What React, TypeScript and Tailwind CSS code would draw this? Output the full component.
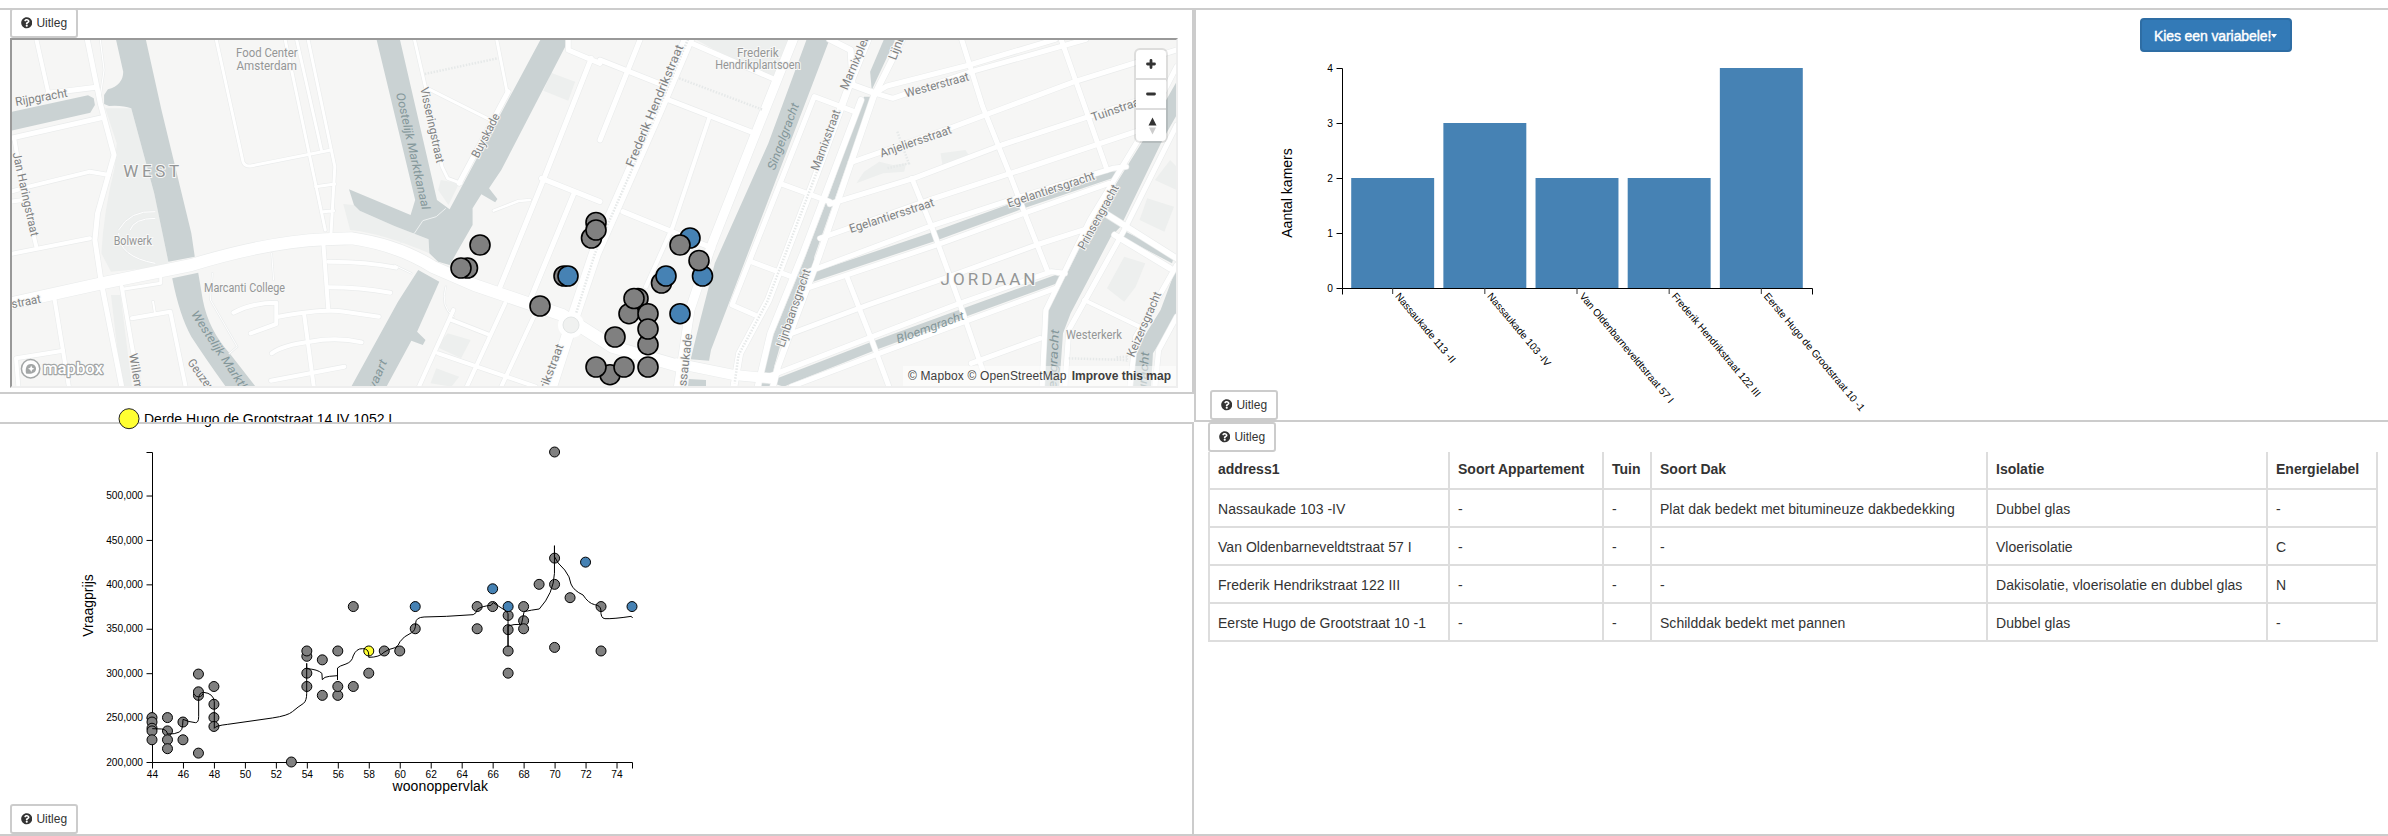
import React from "react";
import { FaQuestionCircle } from "react-icons/fa";

type Pt = [number, number];

const SX = 600 / 1568;
const SY = 1 / 3;
const EAST = 1568;

const GRAY = "#808080";
const BLUE = "#4682b4";

/* ---------- shared ---------- */

function HelpButton({ className = "" }: { className?: string }) {
  return (
    <button
      className={`flex h-[30px] w-[68px] items-center justify-center gap-1 rounded-[3px] border-2 border-[#ccc] bg-white text-xs leading-none text-[#333] ${className}`}
    >
      <FaQuestionCircle className="size-[11.500px]" />
      <span>Uitleg</span>
    </button>
  );
}

/* ---------- map ---------- */

const westWater = [
  "M303,118L381,118L422,330L500,700L509,770L440,785L403,580L343,325Q320,315 285,318L272,312L272,285L282,268Q322,255 322,215Z",
  "M28,336L230,286L245,295L248,315L236,338L28,392Z",
  "M450,835L518,818L530,900Q545,990 600,1060L668,1160L590,1160Q540,1080 500,1010Q470,950 450,835Z",
  "M984,118L1045,118L1142,600L1175,628L1413,118L1487,118L1310,510L1278,565L1300,597L1294,607L1258,583L1235,625L1235,675L1200,745L1175,795L1145,785L1122,760L1120,718Q1030,680 940,632L925,615L912,568L1073,645L1085,600Z",
  "M1093,810L1148,845L1090,995L1112,1020L1105,1035L1075,1022L1010,1160L918,1160L1040,905Z",
];
const eastWater = [
  "M540,118L600,118L330,930L290,1050L285,1082L237,1078L262,960L300,790L440,430Z",
  "M232,1137L277,1140L277,1160L230,1160Z",
  "M742,118L772,118L710,270L706,215Z",
  "M690,290L708,290L560,770L552,850L525,860L480,1000L455,1100L448,1160L422,1160Q425,1100 455,1000L530,790L600,580Z",
  "M550,820L860,700L1100,600L1330,515L1362,512L1350,530L1100,628L870,725L545,850Z",
  "M440,1145L700,1030L950,925L1190,825L1203,830L1195,850L955,950L720,1050L480,1160Z",
  "M1507,245L1507,345L1470,420L1360,680L1335,710L1230,940L1210,1000L1200,1160L1160,1160L1162,1000L1170,935L1290,660L1420,420Z",
  "M1365,690L1500,768L1495,790L1355,705Z",
  "M1507,800L1507,950L1445,1060L1440,1160L1392,1160L1400,1050L1465,930Z",
];
const westParks = [
  "M275,325L343,325L403,580L440,785L430,800L290,815L265,760Q270,640 300,500L305,430Z",
  "M897,612L925,615L940,632Q1030,680 1120,718L1122,760Q1000,700 915,690Z",
  "M290,885L315,885L345,1160L318,1160Z",
  "M1440,218L1503,245L1485,302L1420,272Z",
  "M1152,540L1200,550L1172,615L1145,570Z",
  "M1170,1000L1230,1020L1205,1075L1140,1040Z",
  "M1140,1105L1200,1130L1180,1160L1125,1150Z",
];
const eastParks = [
  "M250,118L520,118L460,235L300,150Z",
  "M670,550L690,515L730,485L765,495L800,490L795,515L740,520Z",
  "M890,460L955,450L965,468L895,495Z",
  "M1490,480L1507,500L1507,570L1450,540Z",
  "M1430,595L1500,620L1475,695L1410,660Z",
  "M1370,770L1425,790L1400,860L1370,905L1325,865Z",
];

type Road = [number, string];
const westRoads: Road[] = [
  [4, "M95,118L125,272"],
  [5, "M228,118L262,310L298,465L255,640L248,720L265,850L318,1160"],
  [1.2, "M262,118L272,210L262,290"],
  [5, "M28,415L270,352"],
  [5, "M125,280L250,262"],
  [4, "M28,575L75,560L235,515L285,525"],
  [4, "M28,605L60,600"],
  [4, "M28,762L235,715"],
  [4, "M38,420L65,600L95,740"],
  [4, "M140,880L180,1160"],
  [4, "M42,1075L165,1052M42,1075L48,1160"],
  [4, "M318,860L345,1040L365,1160M345,955L445,935L485,1160"],
  [2, "M400,905L405,940"],
  [3, "M320,868L420,850L420,820"],
  [3, "M565,118L635,485Q640,500 655,498L865,450"],
  [3, "M745,118L850,690M775,118L840,450"],
  [3, "M805,118L875,500L865,700M825,560L875,552M845,635L872,632"],
  [4, "M845,730L858,930"],
  [4, "M858,785Q960,785 1035,803M858,862Q940,862 1020,878"],
  [4, "M610,938Q660,908 722,908L722,972L655,1000M728,950Q850,925 900,935L990,950"],
  [4, "M795,945L820,1160"],
  [4, "M710,1060Q740,1035 810,1025Q880,1010 945,1027M708,1142L900,1100"],
  [3, "M1083,118L1112,262L1155,500L1170,535L1205,550"],
  [3, "M1112,262L1290,365M1298,118L1325,275"],
  [5, "M1328,275L1200,550"],
  [5, "M1545,175L1420,540L1300,880M1415,535L1568,605M1500,580L1380,915M1485,118L1485,150L1568,190"],
  [2.5, "M1290,632L1355,603L1385,600"],
  [4, "M1185,930L1095,1160M1180,960L1280,1005M1320,910L1220,1160M1395,950L1310,1160M1145,1060L1400,1160"],
  [1, "M555,820L550,900L620,1040L600,1060M710,760L715,840M1030,795L1075,820M1165,860Q1150,920 1185,950"],
  [1, "M310,690Q340,630 405,635M310,700Q310,770 405,790M340,690Q350,655 405,655"],
];
const eastRoads: Road[] = [
  [5, "M105,118L0,420M0,180L175,260M240,130L460,240M180,300L405,400M60,635L295,745"],
  [4, "M285,355L190,680L120,860"],
  [5, "M720,278L750,258L965,195L1190,118M720,280L765,295L970,215L1270,118"],
  [5, "M655,488L920,382L1240,245L1507,150M600,612L820,535L1050,435L1410,300"],
  [5, "M575,715L860,600L1100,510L1400,395"],
  [5, "M545,815L860,680L1100,590L1340,505L1375,500M540,865L880,735L1120,635L1330,550"],
  [5, "M490,1005L700,915L900,835L1140,735L1290,680"],
  [5, "M440,1130L700,1015L940,910L1180,815L1215,820M500,1160L730,1060L960,962L1190,865"],
  [5, "M970,1090L1150,1015"],
  [5, "M945,118L1000,320L1070,520L1110,640L1170,815M1205,118L1270,330L1325,510"],
  [5, "M815,535L870,690L940,910L1000,1110M645,830L710,1020L755,1160"],
  [5, "M1507,200L1420,395L1280,660L1165,930L1155,1160M1507,375L1370,690L1225,990L1215,1160"],
  [6, "M1320,640L1507,775M1345,705L1490,805"],
  [5, "M1507,795L1460,890L1400,1010L1385,1160M1507,950L1460,1050L1450,1160"],
  [4, "M1265,900L1410,980"],
  [7, "M700,118L650,260L560,540L440,900L365,1060L350,1160"],
  [6, "M790,118L715,290L572,770L510,960L465,1100L452,1160M682,300L530,760L445,1000L412,1160"],
  [6, "M600,118L655,150L660,255L720,280"],
  [5, "M665,335L560,290L345,915L405,945M470,550L600,605M395,785L500,830"],
  [9, "M505,118L400,420L290,740L235,930L205,1160"],
  [10, "M200,1090L350,1125L445,1135"],
];
const artery: Road[] = [
  [12, "M28,910L265,850L500,795Q700,725 850,718L920,715Q1040,735 1130,800L1240,855L1470,945L1600,1040L1780,1100"],
  [12, "M1798,118L1720,330L1555,760L1492,975L1440,1160"],
];

function Roads({ data, cased }: { data: Road[]; cased: boolean }) {
  return (
    <>
      {data.map(([w, d], i) => (
        <path
          key={i}
          d={d}
          fill="none"
          strokeLinecap="round"
          strokeLinejoin="round"
          vectorEffect="non-scaling-stroke"
          stroke={cased ? "#eaecec" : "#ffffff"}
          strokeWidth={cased ? w + 1.2 : w}
        />
      ))}
    </>
  );
}

function Shapes({ data, fill }: { data: string[]; fill: string }) {
  return (
    <>
      {data.map((d, i) => (
        <path key={i} d={d} fill={fill} />
      ))}
    </>
  );
}

type LabelSpec = {
  t: string;
  a: Pt;
  b: Pt;
  size?: number;
  water?: boolean;
  place?: boolean;
};

const west = (t: string, a: Pt, b: Pt, o: Partial<LabelSpec> = {}): LabelSpec => ({ t, a, b, ...o });
const east = (t: string, a: Pt, b: Pt, o: Partial<LabelSpec> = {}): LabelSpec => ({
  t,
  a: [a[0] + EAST, a[1]],
  b: [b[0] + EAST, b[1]],
  ...o,
});

const labels: LabelSpec[] = [
  west("Food Center", [617, 157], [778, 157], { place: true }),
  west("Amsterdam", [618, 196], [776, 196], { place: true }),
  west("Rijpgracht", [40, 305], [176, 277]),
  west("Jan Haringstraat", [44, 457], [92, 708]),
  west("WEST", [322, 512], [468, 512], { size: 17, place: true }),
  west("Bolwerk", [297, 722], [397, 722], { place: true }),
  west("Marcanti College", [533, 862], [745, 862], { place: true }),
  west("straat", [30, 912], [106, 895]),
  west("Westelijk Marktk", [508, 935], [643, 1170], { water: true }),
  west("Willem", [348, 1060], [364, 1170]),
  west("Geuzen", [498, 1080], [555, 1170]),
  west("Oostelijk Marktkanaal", [1046, 278], [1114, 628], { water: true }),
  west("Visseringstraat", [1109, 262], [1152, 488]),
  west("Buyskade", [1240, 470], [1297, 342]),
  west("vaart", [970, 1165], [1002, 1080], { water: true }),
  west("rikstraat", [1419, 1165], [1463, 1033]),
  east("Frederik Hendrikstraat", [76, 498], [208, 135]),
  east("Frederik", [358, 157], [467, 157], { place: true }),
  east("Hendrikplantsoen", [301, 193], [524, 193], { place: true }),
  east("Singelgracht", [446, 508], [510, 310], { water: true }),
  east("Marnixplein", [636, 267], [698, 95]),
  east("Marnixstraat", [560, 510], [618, 330]),
  east("Lijnb", [762, 178], [786, 105]),
  east("Lijnbaansgracht", [470, 1040], [540, 808]),
  east("ssaukade", [214, 1158], [230, 1000]),
  east("Westerstraat", [797, 280], [963, 228]),
  east("Tuinstraat", [1285, 352], [1418, 300]),
  east("Anjeliersstraat", [732, 460], [917, 387]),
  east("Egelantiersstraat", [652, 687], [872, 605]),
  east("Egelantiersgracht", [1065, 610], [1292, 525]),
  east("Prinsengracht", [1256, 745], [1347, 556]),
  east("JORDAAN", [890, 836], [1138, 836], { size: 17, place: true }),
  east("Bloemgracht", [775, 1018], [950, 945], { water: true }),
  east("Westerkerk", [1218, 1005], [1364, 1005], { place: true }),
  east("Keizersgracht", [1385, 1068], [1457, 876]),
  east("sengracht", [1180, 1190], [1188, 988], { water: true }),
  east("gracht", [1416, 1175], [1424, 1055], { water: true }),
];

function MapLabel({ t, a, b, size = 12, water, place }: LabelSpec) {
  const x = a[0] * SX;
  const y = a[1] * SY;
  const dx = b[0] * SX - x;
  const dy = b[1] * SY - y;
  const len = Math.hypot(dx, dy);
  const angle = (Math.atan2(dy, dx) * 180) / Math.PI;
  return (
    <text
      transform={`translate(${x} ${y}) rotate(${angle})`}
      dy="0.36em"
      textLength={len}
      lengthAdjust={size > 14 ? "spacing" : "spacingAndGlyphs"}
      fontSize={size}
      fontStyle={water ? "italic" : "normal"}
      fill={water ? "#84979a" : place ? "#949696" : "#7f8283"}
      stroke={water ? "none" : "#f8f8f7"}
      strokeWidth={water ? 0 : 2}
      paintOrder="stroke"
    >
      {t}
    </text>
  );
}

type Marker = [number, number, boolean?];
const markers: Marker[] = [
  [467.5, 268], [461, 268], [480, 245], [596, 222.5], [591.5, 238], [596, 230],
  [564, 276], [568, 276, true], [540, 306], [690, 238, true], [680, 245],
  [702.5, 276, true], [699, 260.5], [661.5, 283], [666, 276, true], [680, 313.7, true],
  [638, 298.5], [629, 313.7], [648, 313.7], [634, 298.5], [648, 344.7], [648, 329],
  [615, 337], [610, 374.7], [596, 367], [624, 367], [648, 367],
];

function CityMap() {
  return (
    <div className="relative h-[350px] w-[1168px] overflow-hidden border-2 border-t-[#999] border-r-[#eee] border-b-[#eee] border-l-[#999] bg-[#f6f6f5]">
      <svg className="block h-[346px] w-[1164px] font-['Roboto','Noto_Sans',sans-serif]" viewBox="12 40 1164 346">
        <g transform={`scale(${SX} ${SY})`}>
          <Shapes data={westParks} fill="#edefee" />
          <g transform={`translate(${EAST} 0)`}>
            <Shapes data={eastParks} fill="#edefee" />
          </g>
          <Shapes data={westWater} fill="#cad2d3" />
          <g transform={`translate(${EAST} 0)`}>
            <Shapes data={eastWater} fill="#cad2d3" />
          </g>
          <Roads data={westRoads} cased />
          <g transform={`translate(${EAST} 0)`}>
            <Roads data={eastRoads} cased />
          </g>
          <Roads data={artery} cased />
          <Roads data={westRoads} cased={false} />
          <g transform={`translate(${EAST} 0)`}>
            <Roads data={eastRoads} cased={false} />
          </g>
          <Roads data={artery} cased={false} />
          <path
            d="M1045,730L1083,700L1105,662L1140,650L1165,625"
            fill="none"
            stroke="#eef1f1"
            vectorEffect="non-scaling-stroke"
          />
          <path
            d="M1798,118L1720,330L1555,760L1500,960M2195,330L2125,545L2005,905L1930,1065L1920,1150M1775,235L1995,330M2345,395L2375,490L2318,505M2918,1072L2945,1070L2945,1085M2793,1075L2945,1080M1110,222L1300,175"
            fill="none"
            stroke="#e6e9e9"
            strokeWidth={2.5}
            strokeDasharray="1.5 1.5"
            vectorEffect="non-scaling-stroke"
          />
        </g>
        <circle cx={571} cy={325} r={13} fill="#fff" />
        <circle cx={571} cy={325} r={8} fill="#f0f1f0" stroke="#e3e6e6" />
        {labels.map((l, i) => (
          <MapLabel key={i} {...l} />
        ))}
        <g>
          <circle cx={30.6} cy={368.7} r={9.2} fill="#fff" fillOpacity={0.9} stroke="#a3a6a6" strokeWidth={1.5} />
          <path
            d="M26 373.5c-.8-4.600 0-9.500 5-9.500 3.200 0 5 2.200 5 4.800 0 4.600-5 5.500-10 4.700Z"
            fill="#a3a6a6"
          />
          <path d="m31.200 365.500 1 2.200 2.200 1-2.200 1-1 2.200-1-2.200-2.200-1 2.200-1Z" fill="#fff" />
          <text
            x={43}
            y={374}
            fontSize={17}
            fontWeight={500}
            textLength={60}
            lengthAdjust="spacingAndGlyphs"
            fill="#fff"
            stroke="#a3a6a6"
            strokeWidth={2.4}
            strokeLinejoin="round"
            paintOrder="stroke"
          >
            mapbox
          </text>
        </g>
        {markers.map(([x, y, blue], i) => (
          <circle key={i} cx={x} cy={y} r={10} fill={blue ? BLUE : GRAY} stroke="#000" strokeWidth={1.6} />
        ))}
      </svg>

      <div className="absolute top-[10px] right-[10px] flex w-[30px] flex-col divide-y-2 divide-[#ddd] rounded-[4px] bg-white shadow-[0_0_0_2px_rgba(0,0,0,0.1)]">
        <button className="flex h-[30px] items-center justify-center">
          <svg className="size-[20px]" viewBox="0 0 20 20">
            <path d="M10 6.500v7M6.500 10h7" stroke="#333" strokeWidth={2.8} strokeLinecap="round" />
          </svg>
        </button>
        <button className="flex h-[30px] items-center justify-center">
          <svg className="size-[20px]" viewBox="0 0 20 20">
            <path d="M6.500 10h7" stroke="#333" strokeWidth={2.8} strokeLinecap="round" />
          </svg>
        </button>
        <button className="flex h-[31px] items-center justify-center">
          <svg className="size-[20px]" viewBox="0 0 20 20">
            <path d="M7.500 9.500 11.500 1.500 15.500 9.500Z" fill="#333" />
            <path d="M8 11.500 11.500 18.500 15 11.500Z" fill="#ccc" />
          </svg>
        </button>
      </div>

      <div className="absolute right-0 bottom-0 flex h-5 items-center gap-[5px] bg-white/50 px-[5px] text-xs whitespace-nowrap text-[#404040]">
        <span className="tracking-[0.15px]">© Mapbox © OpenStreetMap</span>
        <b className="font-bold">Improve this map</b>
      </div>
    </div>
  );
}

/* ---------- scatter plot ---------- */

const scatter: [number, number[]][] = [
  [44, [250, 245, 238, 235, 225]],
  [45, [250, 235, 225, 215]],
  [46, [245, 225]],
  [47, [299, 275, 279, 210]],
  [48, [285, 265, 250, 240]],
  [53, [200]],
  [54, [319, 325, 300, 285]],
  [55, [315, 275]],
  [56, [325, 275, 285]],
  [57, [375, 285]],
  [58, [300]],
  [59, [325]],
  [60, [325]],
  [61, [350]],
  [65, [375, 350]],
  [66, [375]],
  [67, [365, 349, 325, 300]],
  [68, [375, 359, 350]],
  [69, [400]],
  [70, [549, 429.5, 400, 329]],
  [71, [385]],
  [73, [375, 325]],
];
const scatterBlue: Pt[] = [[61, 375], [66, 395], [67, 375], [72, 425], [75, 375]];
const px = (v: number) => 152 + ((v - 44) * 480) / 31;
const py = (v: number) => 762 - ((v - 200) * 310) / 349;

function ScatterPlot() {
  return (
    <svg
      className="block h-[412px] w-[1192px] overflow-visible font-['Liberation_Sans',Arial,sans-serif]"
      viewBox="0 424 1192 412"
    >
      <circle cx={129} cy={418.7} r={10} fill="#ffff32" stroke="#222" />
      <g fill="none" stroke="#000">
        <path d="M146.500,452.500H152.500V762.500H146.500" />
        <path d="M152.500,768.500V762.500H632.500V768.500" />
        {[250, 300, 350, 400, 450, 500].map((v) => (
          <path key={v} d={`M146.500,${py(v) + 0.5}H152.500`} />
        ))}
        {Array.from({ length: 15 }, (_, i) => 46 + i * 2).map((v) => (
          <path key={v} d={`M${px(v) + 0.5},762.500V768.500`} />
        ))}
      </g>
      <g fontSize={10.2}>
        {[200, 250, 300, 350, 400, 450, 500].map((v) => (
          <text key={v} x={143} y={py(v) + 3.7} textAnchor="end">
            {v},000
          </text>
        ))}
        {Array.from({ length: 16 }, (_, i) => 44 + i * 2).map((v) => (
          <text key={v} x={px(v) + 0.5} y={778} textAnchor="middle">
            {v}
          </text>
        ))}
      </g>
      <g fontSize={14}>
        <text x={392.5} y={791} textLength={95.5}>
          woonoppervlak
        </text>
        <text transform="translate(92.500 605.500) rotate(-90)" textAnchor="middle">
          Vraagprijs
        </text>
      </g>
      <g stroke="#000">
        {scatter.flatMap(([x, ys]) =>
          ys.map((y) => <circle key={`${x}-${y}`} cx={px(x)} cy={py(y)} r={5} fill={GRAY} />),
        )}
        {scatterBlue.map(([x, y]) => (
          <circle key={x} cx={px(x)} cy={py(y)} r={5} fill={BLUE} />
        ))}
        <circle cx={px(58)} cy={py(325)} r={5} fill="#ffff32" />
      </g>
      <g transform="translate(0 380) scale(0.446429 0.333333)">
        <path
          d="M341,1046L362,1047Q374,1049 375,1062Q392,1063 402,1056Q409,1050 409,1036L410,1018Q422,1026 438,1028Q445,1028 445,1010V955Q446,938 456,937Q478,940 480,965V1045Q482,1037 510,1033L610,1014Q645,1007 655,995Q668,980 680,970Q687,962 687,940V850V866Q712,868 721,880L722,899Q726,890 738,889L756,887V900V864Q760,858 775,852Q789,845 791,828Q798,805 812,806Q826,805 826,825V832Q850,832 860,817Q868,808 885,803Q893,798 896,785Q903,770 922,758Q931,752 931,730Q931,712 950,711L1000,709L1060,704Q1068,700 1069,688Q1080,678 1100,676L1105,668L1130,690L1138,700V800V738Q1150,732 1168,733L1174,695Q1190,690 1208,687Q1240,640 1242,580V497V530Q1247,548 1265,570Q1277,590 1279,612Q1285,632 1306,645Q1318,670 1332,674Q1345,676 1346,690Q1345,715 1355,716Q1375,717 1414,709L1417,714"
          fill="none"
          stroke="#000"
          strokeWidth={1}
          vectorEffect="non-scaling-stroke"
        />
      </g>
    </svg>
  );
}

/* ---------- bar chart ---------- */

const bars: [string, number][] = [
  ["Nassaukade 113 -II", 2],
  ["Nassaukade 103 -IV", 3],
  ["Van Oldenbarneveldtstraat 57 I", 2],
  ["Frederik Hendrikstraat 122 III", 2],
  ["Eerste Hugo de Grootstraat 10 -1", 4],
];

function BarChart() {
  const step = 470 / 5.1;
  const band = step * 0.9;
  return (
    <svg
      className="block h-[380px] w-[800px] font-['Liberation_Sans',Arial,sans-serif]"
      viewBox="1196 10 800 380"
      overflow="visible"
    >
      {bars.map(([name, n], i) => (
        <rect key={name} x={1342 + step * 0.1 + i * step} y={288 - n * 55} width={band} height={n * 55} fill={BLUE} />
      ))}
      <g fill="none" stroke="#000">
        <path d="M1336.500,68.500H1342.500V288.500H1336.500" />
        <path d="M1342.500,294.500V288.500H1812.500V294.500" />
        {[1, 2, 3].map((n) => (
          <path key={n} d={`M1336.500,${288.5 - n * 55}H1342.500`} />
        ))}
      </g>
      <g fontSize={10.2}>
        {[0, 1, 2, 3, 4].map((n) => (
          <text key={n} x={1333} y={292 - n * 55} textAnchor="end">
            {n}
          </text>
        ))}
        {bars.map(([name], i) => {
          const cx = 1342 + step * 0.1 + i * step + band / 2;
          return (
            <g key={name}>
              <path d={`M${cx},288V294`} stroke="#333" />
              <text transform={`translate(${cx + 2} 296.500) rotate(50)`}>{name}</text>
            </g>
          );
        })}
      </g>
      <text transform="translate(1292 193) rotate(-90)" textAnchor="middle" fontSize={14}>
        Aantal kamers
      </text>
    </svg>
  );
}

/* ---------- table ---------- */

const rows = [
  ["address1", "Soort Appartement", "Tuin", "Soort Dak", "Isolatie", "Energielabel"],
  ["Nassaukade 103 -IV", "-", "-", "Plat dak bedekt met bitumineuze dakbedekking", "Dubbel glas", "-"],
  ["Van Oldenbarneveldtstraat 57 I", "-", "-", "-", "Vloerisolatie", "C"],
  ["Frederik Hendrikstraat 122 III", "-", "-", "-", "Dakisolatie, vloerisolatie en dubbel glas", "N"],
  ["Eerste Hugo de Grootstraat 10 -1", "-", "-", "Schilddak bedekt met pannen", "Dubbel glas", "-"],
];

function DetailTable() {
  return (
    <div className="w-[1170px] border-r-2 border-[#ddd] text-sm text-[#333]">
      {rows.map((r, i) => (
        <div
          key={i}
          className={`grid h-[38px] grid-cols-[240px_154px_48px_336px_280px_110px] ${i === 0 ? "font-bold" : "tracking-[0.03px]"}`}
        >
          {r.map((c, j) => (
            <div
              key={j}
              className={`flex items-center border-b-2 border-l-2 border-[#ddd] pl-2 leading-5 whitespace-nowrap ${
                i === 0 ? "pb-[2px]" : "pt-[2px]"
              }`}
            >
              {c}
            </div>
          ))}
        </div>
      ))}
    </div>
  );
}

/* ---------- page ---------- */

export default function App() {
  return (
    <div className="flex h-[836px] w-[2388px] overflow-hidden bg-white pt-2 font-['Liberation_Sans',Arial,sans-serif]">
      <div className="flex w-[1194px] shrink-0 flex-col">
        <section className="h-[386px] border-y-2 border-r-2 border-[#ccc] pl-[10px]">
          <HelpButton className="-mt-[2px]" />
          <CityMap />
        </section>
        <div className="relative z-0 h-7 shrink-0">
          <svg className="block h-7 w-full overflow-visible" viewBox="0 394 1194 28">
            <text x={144} y={424} fontSize={14}>
              Derde Hugo de Grootstraat 14 IV 1052 I
            </text>
          </svg>
        </div>
        <section className="relative z-10 h-[414px] shrink-0 border-y-2 border-r-2 border-[#ccc]">
          <ScatterPlot />
          <HelpButton className="absolute bottom-0 left-[10px]" />
        </section>
      </div>

      <div className="flex w-[1194px] shrink-0 flex-col">
        <section className="relative h-[414px] shrink-0 border-y-2 border-l-2 border-[#ccc]">
          <BarChart />
          <HelpButton className="ml-[14px]" />
          <button className="absolute top-2 left-[944px] flex h-[34px] w-[152px] items-center rounded-[4px] border-2 border-[#2e6da4] bg-[#337ab7] pt-[2px] pl-[12px] text-sm text-white [-webkit-text-stroke:0.4px_white]">
            <span className="tracking-[-0.1px]">Kies een variabele!</span>
            <span className="h-0 w-0 border-x-[3.500px] border-t-[4px] border-x-transparent border-t-white" />
          </button>
        </section>
        <section className="h-[414px] shrink-0 border-b-2 border-[#ccc] pl-[14px]">
          <HelpButton />
          <DetailTable />
        </section>
      </div>
    </div>
  );
}
